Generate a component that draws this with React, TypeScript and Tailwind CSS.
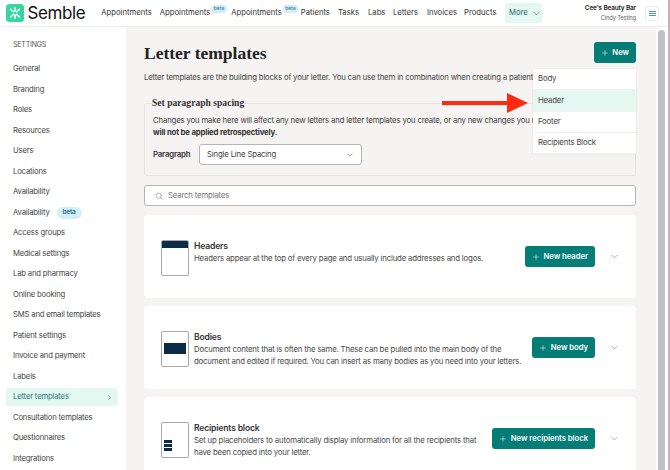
import React from 'react';
import { ChevronDown, ChevronRight, Plus, Search } from 'lucide-react';

const sans = { fontFamily: 'Inter, "Liberation Sans", sans-serif' };

const Beta = () => (
  <span className="relative -top-[4px] ml-[1px] flex h-[8px] w-[15.5px] items-center justify-center rounded-full bg-[#d3edf9] text-[5px] text-[#2f6f8f]">beta</span>
);

const nav = ['General','Branding','Roles','Resources','Users','Locations','Availability','Availability','Access groups','Medical settings','Lab and pharmacy','Online booking','SMS and email templates','Patient settings','Invoice and payment','Labels','Letter templates','Consultation templates','Questionnaires','Integrations'];

function Logo() {
  return (
    <svg width="18" height="18" viewBox="0 0 18 18" className="shrink-0">
      <rect width="18" height="18" rx="3.5" fill="#37d6a0" />
      <g stroke="#fff" strokeWidth="1.5" strokeLinecap="round">
        <path d="M9 3.8v3.4M9 10.8v3.4M4.6 5.2l2.8 2.6M10.6 10.4l2.8 2.6M13.4 5.2l-2.8 2.6M7.4 10.4 4.6 13" />
      </g>
    </svg>
  );
}

function DocIcon({ kind }: { kind: 'top' | 'middle' | 'bottom' }) {
  return (
    <div className="flex h-[36px] w-[28px] shrink-0 flex-col overflow-hidden rounded-[2px] border border-[#a8a8a8] bg-white">
      {kind === 'top' && <div className="h-[7px] bg-[#0b2c48]" />}
      {kind === 'middle' && <div className="mx-[2px] mt-[11px] h-[11px] bg-[#0b2c48]" />}
      {kind === 'bottom' && (
        <div className="ml-[2px] mt-[17px] flex w-[8px] flex-col gap-[1px]">
          <div className="h-[3px] bg-[#0b2c48]" />
          <div className="h-[3px] bg-[#0b2c48]" />
          <div className="h-[3px] bg-[#0b2c48]" />
        </div>
      )}
    </div>
  );
}

function NewButton({ label }: { label: string }) {
  return (
    <button className="flex h-[21px] shrink-0 items-center gap-[3.5px] whitespace-nowrap rounded-[3px] bg-[#047d77] pl-[7px] pr-[7px] text-[7.7px] font-semibold tracking-[-0.03px] text-white">
      <Plus size={8} strokeWidth={1.5} />
      {label}
    </button>
  );
}

function Card({ kind, title, lines, button, mt }: { kind: 'top' | 'middle' | 'bottom'; title: string; lines: string[]; button: string; mt?: boolean }) {
  return (
    <div className={`flex h-[83px] shrink-0 items-center rounded-[4px] bg-white pl-[17px] pr-[16px] ${mt ? 'mt-[8px]' : ''}`}>
      <div className="mt-[3px] flex h-[36px] min-w-0 flex-1 items-start">
        <DocIcon kind={kind} />
        <div className="ml-[5px] min-w-0 flex-1">
          <div className="text-[8.6px] font-semibold leading-[13px] text-[#333]">{title}</div>
          {lines.map((l) => (
            <div key={l} className="whitespace-nowrap text-[7.8px] leading-[11.5px] text-[#4a4a4a]">{l}</div>
          ))}
        </div>
      </div>
      <NewButton label={button} />
      <ChevronDown size={11} strokeWidth={1} className="ml-[14px] shrink-0 text-[#555]" />
    </div>
  );
}

export default function App() {
  return (
    <div style={sans} className="flex h-[470px] w-[670px] overflow-hidden bg-white tracking-[-0.18px] text-[#333]">
      <div className="relative flex h-full w-[667.5px] shrink-0 flex-col">
        <header className="flex h-[27px] shrink-0 items-center whitespace-nowrap border-b border-[#eeeeec] bg-white pl-[6px]">
          <Logo />
          <span className="ml-[3.5px] text-[17px] font-normal leading-none tracking-[-0.4px] text-[#111]">Semble</span>
          <nav className="ml-[16px] flex items-center text-[7.7px] tracking-normal text-[#333]">
            <span>Appointments</span>
            <span className="ml-[8px]">Appointments</span><Beta />
            <span className="ml-[4.5px]">Appointments</span><Beta />
            <span className="ml-[2.5px]">Patients</span>
            <span className="ml-[8px]">Tasks</span>
            <span className="ml-[9px]">Labs</span>
            <span className="ml-[7.5px]">Letters</span>
            <span className="ml-[9px]">Invoices</span>
            <span className="ml-[7px]">Products</span>
            <span className="ml-[8.5px] flex h-[20px] w-[37px] items-center gap-[3px] rounded-[3px] bg-[#e5f7f1] pl-[4px] text-[#1f6f70]">More <ChevronDown size={11} strokeWidth={1.25} /></span>
          </nav>
          <div className="ml-auto text-right leading-[9px]">
            <div className="text-[6.5px] font-semibold text-[#222]">Cee's Beauty Bar</div>
            <div className="text-[5.8px] text-[#666]">Cindy Testing</div>
          </div>
          <div className="ml-[9px] mr-[8.5px] flex h-[15px] w-[14px] flex-col items-center justify-center gap-[1px] rounded-[2px] border border-[#eeeeee]">
            <div className="h-[1px] w-[7px] bg-[#4f9f9f]" />
            <div className="h-[1px] w-[7px] bg-[#4f9f9f]" />
            <div className="h-[1px] w-[7px] bg-[#4f9f9f]" />
          </div>
        </header>
        <div className="flex min-h-0 flex-1">
          <aside className="w-[126px] shrink-0 bg-white pl-[6px] pr-[8px] pt-[12px]">
            <div className="pl-[7px] text-[7px] leading-[12px] text-[#555]">SETTINGS</div>
            <div className="mt-[8px] flex flex-col">
              {nav.map((n, i) => {
                const active = n === 'Letter templates';
                return (
                  <div key={i} className="flex h-[20.5px] shrink-0 items-center">
                    <div className={`flex h-[18px] w-full items-center whitespace-nowrap rounded-[3px] pl-[7px] pr-[5px] text-[7.7px] ${active ? 'bg-[#e5f7f1] text-[#1f7f7a]' : 'text-[#444]'}`}>
                      {n}
                      {i === 7 && <span className="ml-[7px] flex h-[12px] w-[25px] items-center justify-center rounded-full bg-[#d3edf9] text-[6.5px] font-semibold text-[#2f6f8f]">beta</span>}
                      {active && <ChevronRight size={7} className="ml-auto" />}
                    </div>
                  </div>
                );
              })}
            </div>
          </aside>
          <main className="flex w-[530px] shrink-0 flex-col bg-[#f5f4f2] pl-[18px] pr-[20px]">
            <div className="flex h-[39px] shrink-0 items-start justify-between pt-[15px]">
              <h1 style={{ fontFamily: '"Liberation Serif", serif' }} className="text-[17.5px] font-bold leading-[22px] tracking-normal text-[#222]">Letter templates</h1>
              <NewButton label="New" />
            </div>
            <p className="shrink-0 whitespace-nowrap text-[7.8px] leading-[22px] text-[#444]">Letter templates are the building blocks of your letter. You can use them in combination when creating a patient letter.</p>
            <fieldset className="mt-[10px] h-[78px] w-full shrink-0 overflow-hidden rounded-[2px] border border-[#e6e5e2] pl-[8px]">
              <legend style={{ fontFamily: '"Liberation Serif", serif' }} className="-ml-[1px] text-[9.6px] font-bold leading-[10px] tracking-normal text-[#333]">Set paragraph spacing</legend>
              <div className="mt-[7px] whitespace-nowrap text-[7.8px] leading-[11.5px] text-[#444]">Changes you make here will affect any new letters and letter templates you create, or any new changes you make here</div>
              <div className="text-[7.8px] font-bold leading-[11.5px] text-[#333]">will not be applied retrospectively.</div>
              <div className="mt-[6px] flex items-center">
                <span className="w-[46px] text-[7.8px] font-semibold text-[#333]">Paragraph</span>
                <div className="flex h-[21px] w-[163px] items-center justify-between rounded-[3px] border border-[#b5b5b5] bg-white px-[7px] text-[7.8px] text-[#444]">
                  Single Line Spacing
                  <ChevronDown size={8} strokeWidth={1.5} />
                </div>
              </div>
            </fieldset>
            <div className="mt-[9px] flex h-[21px] shrink-0 items-center gap-[5px] rounded-[3px] border border-[#b5b5b5] bg-white pl-[10px] text-[7.8px] text-[#777]">
              <Search size={8} strokeWidth={1.5} />Search templates
            </div>
            <div className="mt-[9px] flex flex-col">
              <Card kind="top" title="Headers" lines={['Headers appear at the top of every page and usually include addresses and logos.']} button="New header" />
              <Card mt kind="middle" title="Bodies" lines={['Document content that is often the same. These can be pulled into the main body of the', 'document and edited if required. You can insert as many bodies as you need into your letters.']} button="New body" />
              <Card mt kind="bottom" title="Recipients block" lines={['Set up placeholders to automatically display information for all the recipients that', 'have been copied into your letter.']} button="New recipients block" />
            </div>
          </main>
          <div className="flex-1 bg-white px-[2px] pt-[3px]">
            <div className="h-full w-[7px] rounded-t-full bg-[#c1c1c1]" />
          </div>
        </div>
        <div className="absolute left-[533px] top-[69px] w-[103px] bg-white text-[7.8px] text-[#444] shadow-[0_0_2px_rgba(0,0,0,0.1)]">
          {['Body', 'Header', 'Footer', 'Recipients Block'].map((t) => (
            <div key={t} className={`flex h-[21.3px] items-center border-b border-[#f1f1f1] pl-[5px] ${t === 'Header' ? 'bg-[#e5f7f1]' : ''}`}>{t}</div>
          ))}
        </div>
        <svg className="absolute left-[442px] top-[92px]" width="88" height="22" viewBox="0 0 88 22">
          <path d="M0 9h65V1l21 10-21 10v-8H0z" fill="#ff2a0f" />
        </svg>
      </div>
      <div className="flex-1 bg-[#ceb0bd]" />
    </div>
  );
}
